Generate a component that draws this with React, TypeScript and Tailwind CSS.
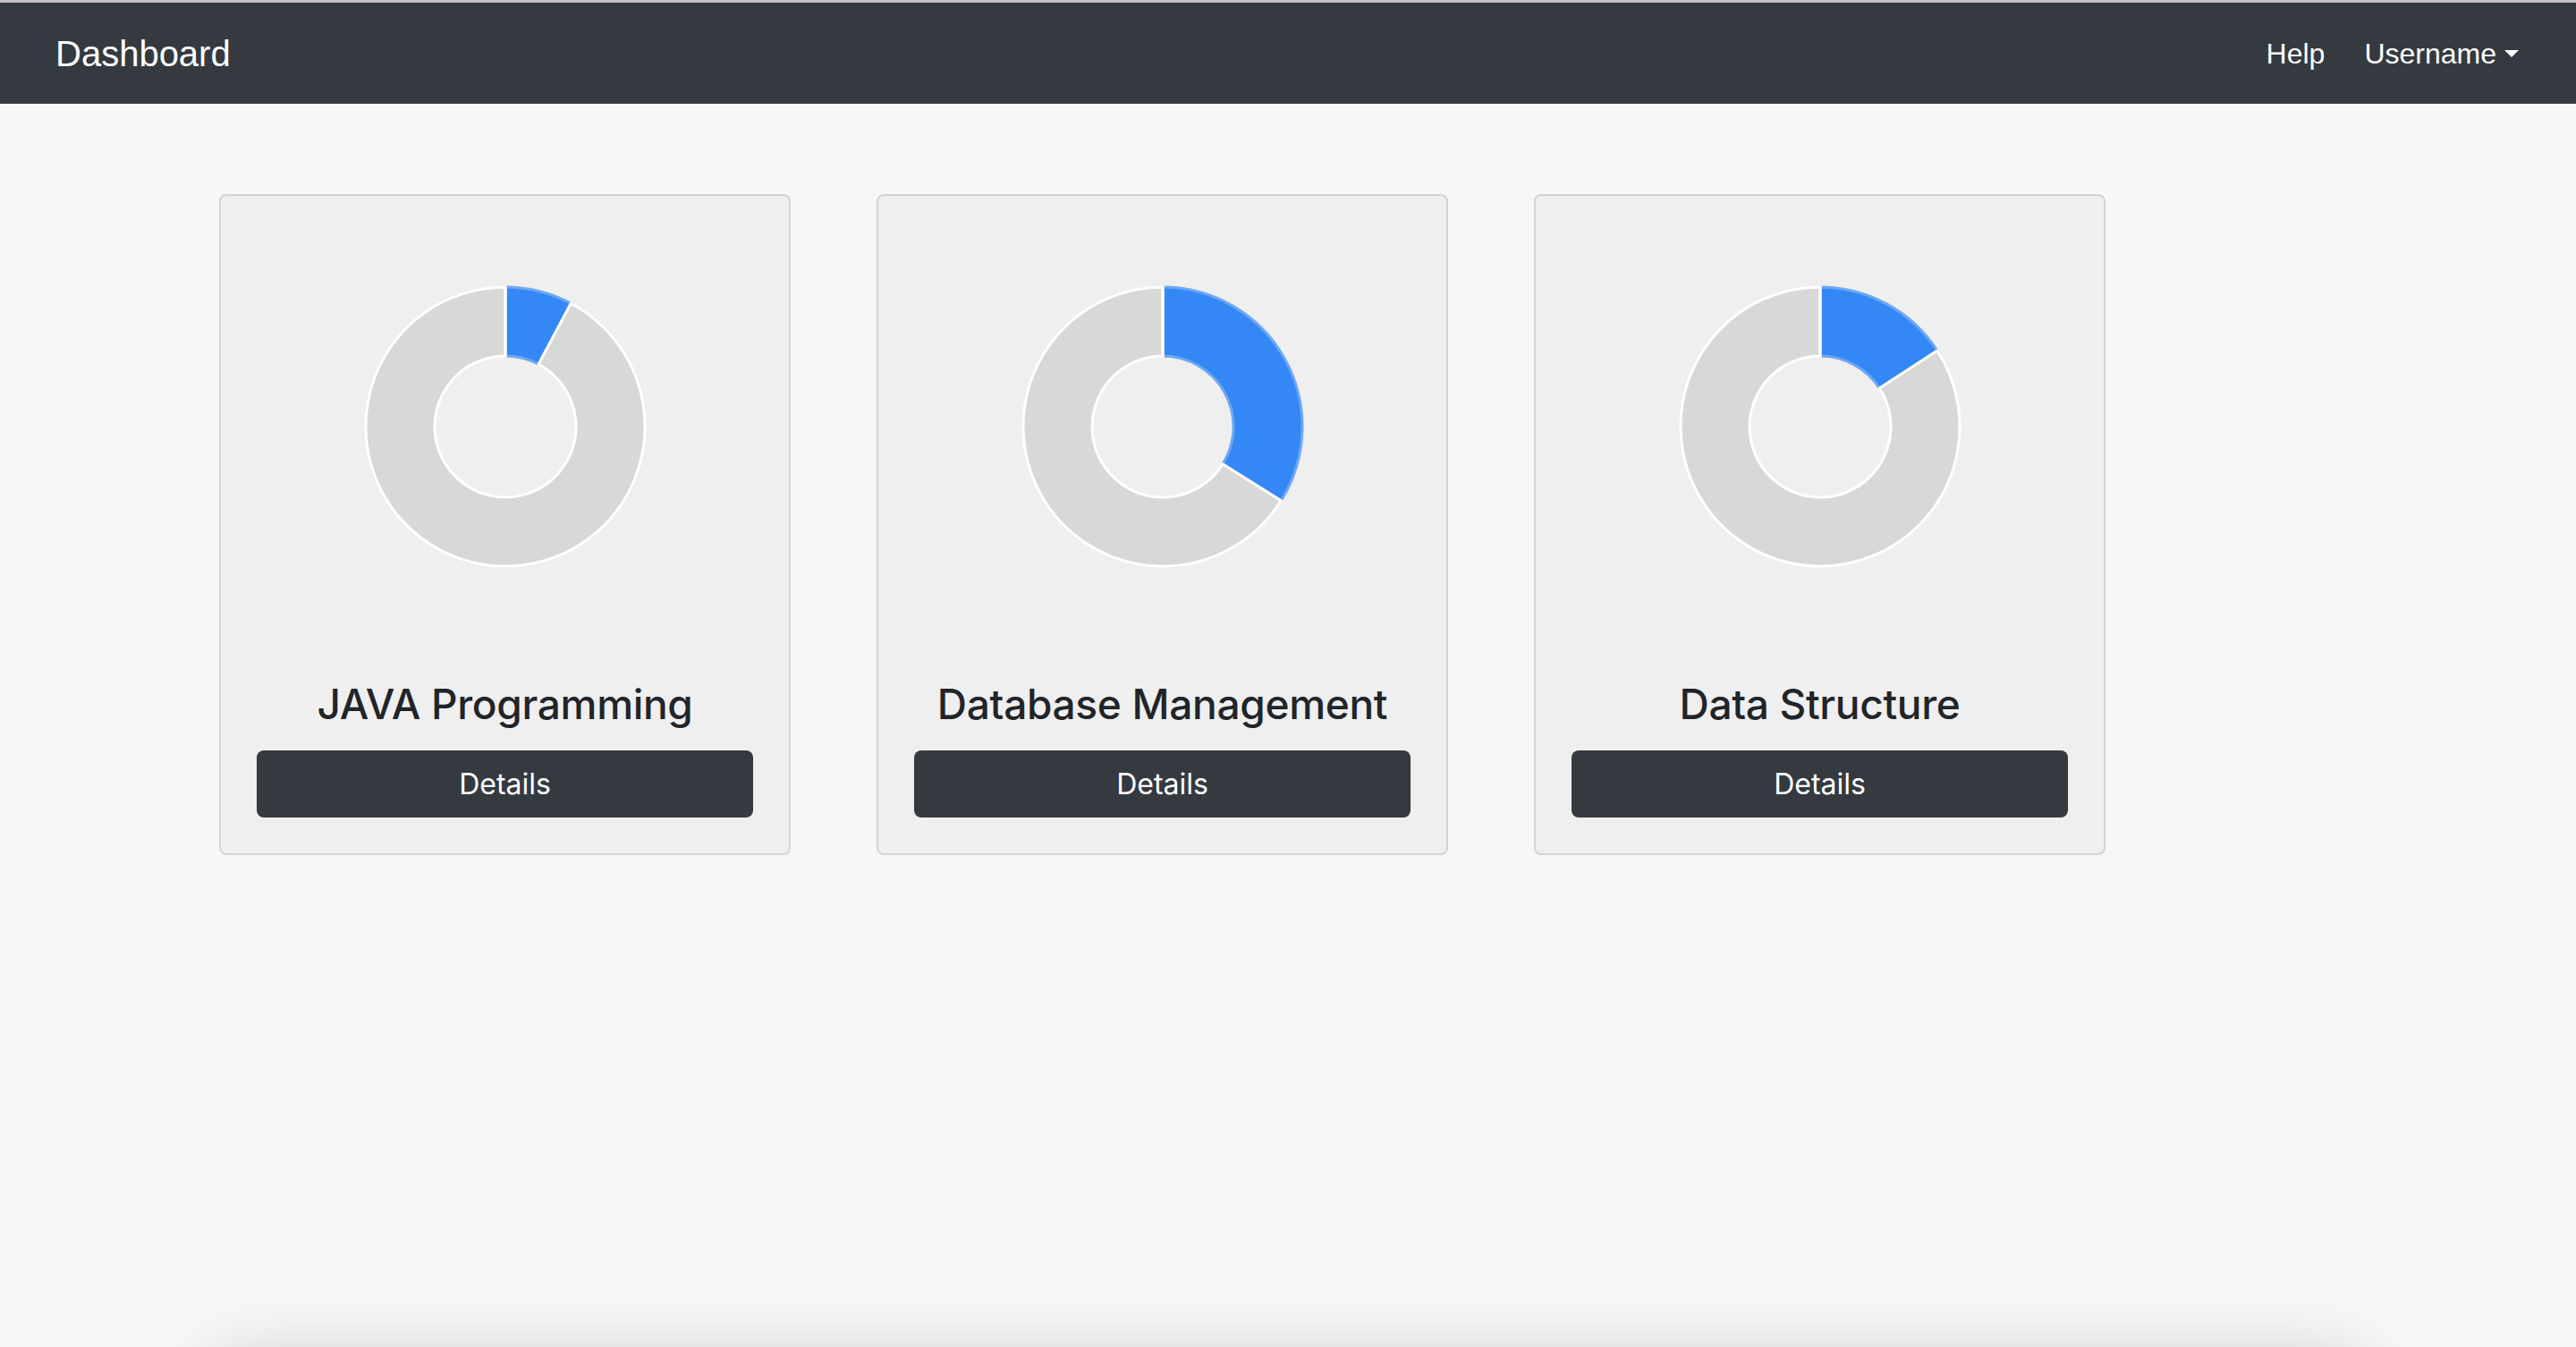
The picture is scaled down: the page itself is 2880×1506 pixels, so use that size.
import React from "react";

interface Course {
    title: string;
    // end angle of the blue slice, degrees clockwise from 12 o'clock
    done: number;
}

const courses: Course[] = [
    { title: "JAVA Programming", done: 28 },
    { title: "Database Management", done: 122 },
    { title: "Data Structure", done: 57 },
];

const pt = (cx: number, cy: number, rad: number, deg: number) => {
    const a = (deg * Math.PI) / 180;
    return `${cx + rad * Math.sin(a)},${cy - rad * Math.cos(a)}`;
};

// ring slice between two angles
const slicePath = (cx: number, cy: number, R: number, r: number, a0: number, a1: number) => {
    const large = a1 - a0 > 180 ? 1 : 0;
    return [
        `M ${pt(cx, cy, R, a0)}`,
        `A ${R} ${R} 0 ${large} 1 ${pt(cx, cy, R, a1)}`,
        `L ${pt(cx, cy, r, a1)}`,
        `A ${r} ${r} 0 ${large} 0 ${pt(cx, cy, r, a0)}`,
        "Z",
    ].join(" ");
};

const Donut = ({ done }: { done: number }) => {
    const c = 160;
    const R = 156;
    const r = 79;
    return (
        <svg width="320" height="320" viewBox="0 0 320 320">
            <path d={slicePath(c, c, R, r, 0, done)} fill="#3388f5" stroke="#6ea7f3" strokeWidth="3" strokeLinejoin="round" />
            <path d={slicePath(c, c, R, r, done, 359.999)} fill="#d8d8d8" stroke="#ffffff" strokeWidth="3" strokeLinejoin="round" />
            <line x1={c} y1={c - R - 1.5} x2={c} y2={c - r + 1.5} stroke="#ffffff" strokeWidth="3" />
        </svg>
    );
};

const CourseCard = ({ course }: { course: Course }) => (
    <div className="w-[639px] rounded-[8px] border-2 border-[#d4d4d4] bg-[#efefef] p-[40px] flex flex-col">
        <div className="h-[436px] flex items-center justify-center">
            <Donut done={course.done} />
        </div>
        <h4 className="mt-[65px] mb-[24px] text-center text-[46px] leading-[1.2] tracking-[-0.3px] font-medium text-[#212529] font-['Inter',sans-serif]">
            {course.title}
        </h4>
        <button className="h-[75px] w-full rounded-[8px] bg-[#343a40] text-white text-[32px] font-['Inter',sans-serif] flex items-center justify-center">
            Details
        </button>
    </div>
);

export default function App() {
    return (
        <div className="relative h-screen overflow-hidden bg-[#f7f7f7] font-['Liberation_Sans',Arial,sans-serif]">
            <div className="h-[3px] bg-[#c2c0c4]" />
            {/* Navbar */}
            <nav className="h-[113px] bg-[#343a40] flex items-center justify-between pl-[62px] pr-[64px] text-white">
                <span className="text-[40px] leading-none">Dashboard</span>
                <div className="flex items-center gap-[44px] text-[32px] leading-none">
                    <span>Help</span>
                    <span className="flex items-center">
                        Username
                        <span className="ml-[9px] mt-[1px] w-0 h-0 border-t-[8px] border-x-[8px] border-t-white border-x-transparent" />
                    </span>
                </div>
            </nav>

            {/* Course cards */}
            <main className="pt-[101px] pl-[245px] flex gap-[96px]">
                {courses.map((c) => (
                    <CourseCard key={c.title} course={c} />
                ))}
            </main>

            {/* shadow of the panel sitting just below the fold */}
            <div className="absolute left-[245px] right-[245px] top-[1525px] h-[200px] bg-[#f7f7f7] shadow-[0_0_80px_rgba(0,0,0,0.22)]" />
        </div>
    );
}
